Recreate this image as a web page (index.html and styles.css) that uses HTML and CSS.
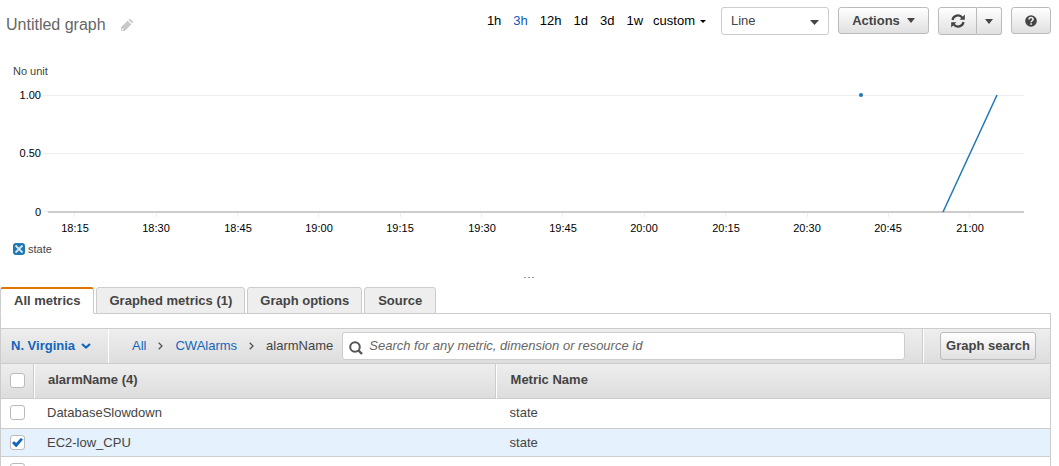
FILE: index.html
```html
<!DOCTYPE html>
<html lang="en">
<head>
<meta charset="utf-8">
<title>CloudWatch Metrics</title>
<link rel="stylesheet" href="styles.css">
</head>
<body>
<header class="header">
  <h1 class="title">Untitled graph</h1>
  <button class="icon-button" type="button" aria-label="Edit title">
    <svg width="12" height="12" viewBox="0 0 12 12"><path fill="#c8c8c8" d="M0 12V8.300L6.600 1.700l3.700 3.700L3.700 12zM7.400.900L8 .400a1.300 1.300 0 0 1 1.800 0l1.800 1.800a1.300 1.300 0 0 1 0 1.800l-.500.600z"/><path fill="#fff" d="M1.200 9.400l1.400 1.400-.500.500H.800V9.800z"/></svg>
  </button>
  <nav class="ranges" aria-label="Time range">
    <a href="#1h">1h</a>
    <a href="#3h" class="current">3h</a>
    <a href="#12h">12h</a>
    <a href="#1d">1d</a>
    <a href="#3d">3d</a>
    <a href="#1w">1w</a>
    <a href="#custom" class="custom">custom <svg width="6" height="3" viewBox="0 0 6 3"><path d="M0 0h6L3 3z"/></svg></a>
  </nav>
  <div class="controls">
    <div class="select-wrap">
      <select class="select" aria-label="Graph type"><option>Line</option></select>
      <svg class="select-caret" width="9" height="5" viewBox="0 0 9 5"><path fill="#444" d="M0 0h9L4.500 5z"/></svg>
    </div>
    <button class="button actions" type="button">Actions <svg width="8" height="5" viewBox="0 0 8 5"><path fill="#444" d="M0 0h8L4 5z"/></svg></button>
    <div class="split">
      <button class="button refresh" type="button" aria-label="Refresh">
        <svg width="14" height="14" viewBox="0 0 14 14"><g fill="none" stroke="#444" stroke-width="2.200"><path d="M1.500 6A5.500 5.500 0 0 1 11.300 3.600M12.500 8A5.500 5.500 0 0 1 2.700 10.400"/></g><path fill="#444" d="M13.800.600v5.200H8.600zM.200 13.400V8.200h5.200z"/></svg>
      </button>
      <button class="button more" type="button" aria-label="Refresh options">
        <svg width="8" height="5" viewBox="0 0 8 5"><path fill="#444" d="M0 0h8L4 5z"/></svg>
      </button>
    </div>
    <button class="button help" type="button" aria-label="Help">
      <svg width="12" height="12" viewBox="0 0 12 12"><circle cx="6" cy="6" r="5.800" fill="#444"/><path d="M4 4.600C4 3 5 2.600 6 2.600s2.100.600 2.100 1.800C8.100 5.700 6.100 5.800 6.100 7.300" fill="none" stroke="#f2f2f2" stroke-width="1.500"/><path fill="#f2f2f2" d="M5.300 8.200h1.600v1.500H5.300z"/></svg>
    </button>
  </div>
</header>

<section class="chart" aria-label="Graph">
  <svg class="plot" viewBox="0 0 1051 180">
    <text class="unit" x="13" y="15">No unit</text>
    <g class="grid">
      <path d="M43 35.500H1024M43 93.500H1024M43 151.500H48"/>
      <path d="M74.500 153v4M156.500 153v4M237.500 153v4M318.500 153v4M400.500 153v4M481.500 153v4M562.500 153v4M644.500 153v4M725.500 153v4M807.500 153v4M888.500 153v4M969.500 153v4"/>
    </g>
    <path class="axis" d="M48 152H1024"/>
    <g class="y-labels">
      <text x="41" y="39">1.00</text>
      <text x="41" y="97">0.50</text>
      <text x="41" y="156">0</text>
    </g>
    <g class="x-labels">
      <text x="75" y="172">18:15</text>
      <text x="156" y="172">18:30</text>
      <text x="238" y="172">18:45</text>
      <text x="319" y="172">19:00</text>
      <text x="400" y="172">19:15</text>
      <text x="482" y="172">19:30</text>
      <text x="563" y="172">19:45</text>
      <text x="644" y="172">20:00</text>
      <text x="726" y="172">20:15</text>
      <text x="807" y="172">20:30</text>
      <text x="888" y="172">20:45</text>
      <text x="970" y="172">21:00</text>
    </g>
    <path class="series" d="M943 152L997 35"/>
    <circle class="point" cx="861" cy="35" r="2"/>
  </svg>
  <div class="legend">
    <svg width="12" height="12" viewBox="0 0 12 12"><rect width="12" height="12" rx="3" fill="#1f77b4"/><path d="M2.500 2.500l7 7M9.500 2.500l-7 7" stroke="#d5e6f3" stroke-width="1.800"/></svg>
    <span>state</span>
  </div>
</section>

<div class="resizer"><svg width="10" height="1" viewBox="0 0 10 1"><path d="M0 0h2v1H0zM4 0h2v1H4zM8 0h2v1H8z" fill="#999"/></svg></div>

<nav class="tabs" aria-label="Metrics views">
  <button class="tab active" type="button">All metrics</button>
  <button class="tab" type="button">Graphed metrics (1)</button>
  <button class="tab" type="button">Graph options</button>
  <button class="tab" type="button">Source</button>
</nav>

<main class="panel">
  <div class="toolbar">
    <button class="region" type="button">N. Virginia <svg width="10" height="6" viewBox="0 0 10 6"><path d="M1 1l4 3.500L9 1" fill="none" stroke="#1166bb" stroke-width="2.200"/></svg></button>
    <nav class="crumbs" aria-label="Breadcrumb">
      <a href="#all">All</a>
      <svg width="5" height="8" viewBox="0 0 5 8"><path d="M.700.700L4 4 .700 7.300" fill="none" stroke="#555" stroke-width="1.300"/></svg>
      <a href="#cwalarms">CWAlarms</a>
      <svg width="5" height="8" viewBox="0 0 5 8"><path d="M.700.700L4 4 .700 7.300" fill="none" stroke="#555" stroke-width="1.300"/></svg>
      <span>alarmName</span>
    </nav>
    <label class="search">
      <svg width="14" height="14" viewBox="0 0 14 14"><circle cx="6" cy="6" r="4.800" fill="none" stroke="#555" stroke-width="2"/><path d="M9.500 9.500L13 13" stroke="#555" stroke-width="2.400"/></svg>
      <input type="text" aria-label="Search metrics" placeholder="Search for any metric, dimension or resource id">
    </label>
    <div class="toolbar-end"><button class="button graph-search" type="button">Graph search</button></div>
  </div>
  <table class="metrics">
    <colgroup><col class="col-check"><col class="col-name"><col></colgroup>
    <thead>
      <tr><th><input class="check" type="checkbox" aria-label="Select all"></th><th>alarmName&nbsp;(4)</th><th>Metric Name</th></tr>
    </thead>
    <tbody>
      <tr class="first"><td><input class="check" type="checkbox" aria-label="DatabaseSlowdown"></td><td>DatabaseSlowdown</td><td>state</td></tr>
      <tr class="selected"><td><input class="check" type="checkbox" aria-label="EC2-low_CPU" checked></td><td>EC2-low_CPU</td><td>state</td></tr>
      <tr><td><input class="check" type="checkbox" aria-label="Select row"></td><td></td><td></td></tr>
    </tbody>
  </table>
</main>
</body>
</html>
```
FILE: styles.css
```css
* {
  box-sizing: border-box;
}

body {
  display: flex;
  flex-direction: column;
  height: 100vh;
  margin: 0;
  padding-right: 8px;
  overflow: hidden;
  background: #fff;
  color: #444;
  font: 13px/16px "Liberation Sans", Arial, sans-serif;
}

button,
input,
select {
  font: inherit;
  color: inherit;
}

svg {
  display: block;
  flex: none;
}

a {
  color: #1166bb;
  text-decoration: none;
}

.header {
  display: flex;
  align-items: flex-start;
  flex: none;
  height: 60px;
  padding: 7px 0 0 6px;
}

.title {
  margin: 8px 15px 0 0;
  color: #666;
  font-size: 16px;
  font-weight: normal;
  line-height: 20px;
}

.icon-button {
  margin-top: 12px;
  padding: 0;
  border: 0;
  background: none;
}

.ranges {
  display: flex;
  gap: 12px;
  margin: 6px 15px 0 auto;
}

.ranges a {
  color: #000;
}

.ranges .current {
  color: #1155bb;
}

.ranges .custom {
  display: flex;
  align-items: center;
  gap: 5px;
  margin-left: -2px;
}

.controls {
  display: flex;
  align-items: flex-start;
  gap: 9px;
}

.select-wrap {
  position: relative;
}

.select {
  display: block;
  width: 108px;
  height: 28px;
  padding: 0 9px;
  border: 1px solid #ccc;
  border-radius: 3px;
  background: #fff;
  appearance: none;
}

.select-caret {
  position: absolute;
  top: 13px;
  right: 10px;
  pointer-events: none;
}

.button {
  display: flex;
  align-items: center;
  justify-content: center;
  height: 27px;
  padding: 0;
  border: 1px solid #bbb;
  border-radius: 3px;
  background: linear-gradient(#fff, #e0e0e0);
  font-weight: bold;
}

.actions {
  gap: 7px;
  width: 91px;
}

.split {
  display: flex;
}

.refresh,
.more {
  height: 28px;
}

.refresh {
  width: 39px;
  border-radius: 3px 0 0 3px;
}

.more {
  width: 25px;
  border-left: 0;
  border-radius: 0 3px 3px 0;
}

.help {
  width: 40px;
}

.chart {
  flex: none;
}

.plot {
  width: 100%;
  font-size: 11px;
}

.unit {
  fill: #444;
}

.grid {
  fill: none;
  stroke: #eee;
}

.axis {
  stroke: #ccc;
  stroke-width: 2px;
}

.y-labels {
  fill: #000;
  text-anchor: end;
}

.x-labels {
  fill: #000;
  text-anchor: middle;
}

.series {
  fill: none;
  stroke: #1f77b4;
  stroke-width: 1.5px;
}

.point {
  fill: #1f77b4;
}

.legend {
  display: flex;
  align-items: center;
  gap: 3px;
  padding: 1px 0 0 13px;
  font-size: 11px;
}

.resizer {
  display: flex;
  flex: none;
  justify-content: center;
  height: 30px;
  padding: 20px 0 0 6px;
}

.tabs {
  display: flex;
  flex: none;
  gap: 2px;
  position: relative;
  margin-bottom: -1px;
}

.tab {
  height: 27px;
  padding: 0 12px;
  border: 1px solid #ccc;
  border-radius: 3px 3px 0 0;
  background: #eee;
  font-weight: bold;
}

.tab:first-child,
.tab:last-child {
  padding: 0 13px;
}

.tab.active {
  border-top: 2px solid #e07700;
  border-bottom-color: #fff;
  background: #fff;
}

.panel {
  flex: 1;
  min-height: 0;
  padding-top: 14px;
  overflow: hidden;
  border: 1px solid #ccc;
  border-bottom: 0;
}

.toolbar {
  display: flex;
  align-items: center;
  height: 36px;
  border: solid #ccc;
  border-width: 1px 0;
  background: linear-gradient(#eee, #ddd);
}

.region {
  display: flex;
  align-items: center;
  align-self: stretch;
  gap: 6px;
  width: 108px;
  padding: 0 0 0 10px;
  border: 0;
  border-right: 1px solid #fff;
  background: none;
  color: #1166bb;
  font-weight: bold;
}

.crumbs {
  display: flex;
  align-items: center;
  gap: 12px;
  padding: 0 9px 0 23px;
}

.search {
  display: flex;
  align-items: center;
  flex: 1;
  gap: 6px;
  height: 28px;
  padding: 0 6px;
  border: 1px solid #ccc;
  border-radius: 3px;
  background: #fff;
}

.search svg {
  margin-top: 3px;
}

.search input {
  flex: 1;
  min-width: 0;
  padding: 0;
  border: 0;
  outline: 0;
  background: none;
}

.search input::placeholder {
  color: #666;
  font-style: italic;
  opacity: 1;
}

.toolbar-end {
  display: flex;
  align-items: center;
  align-self: stretch;
  margin-left: 17px;
  padding: 0 14px 0 17px;
  border-left: 1px solid #ccc;
  box-shadow: inset 1px 0 #fff;
}

.graph-search {
  width: 96px;
  height: 28px;
}

.metrics {
  width: 100%;
  border-collapse: separate;
  border-spacing: 0;
  table-layout: fixed;
}

.col-check {
  width: 33px;
}

.col-name {
  width: 44%;
}

.metrics th,
.metrics td {
  height: 28px;
  padding: 0 0 0 13px;
  border-bottom: 1px solid #ccc;
  text-align: left;
}

.metrics td:last-child {
  padding-left: 14px;
}

.metrics th {
  height: 35px;
  padding-bottom: 2px;
  border-right: 1px solid #ccc;
  background: linear-gradient(#eee, #ddd);
}

.metrics th + th {
  border-left: 1px solid #fff;
}

.metrics th:last-child {
  padding-left: 14px;
  border-right: 0;
}

.metrics .first td {
  height: 30px;
  padding-bottom: 2px;
}

.metrics tr > :first-child {
  padding-left: 9px;
}

.selected {
  background: #e5f1fd;
}

.check {
  display: block;
  width: 15px;
  height: 15px;
  margin: 0;
  border: 1px solid #bbb;
  border-radius: 3px;
  background: #fff;
  appearance: none;
}

.check:checked::after {
  content: "";
  display: block;
  width: 11px;
  height: 9px;
  margin: 2px 1px;
  background: #1166bb;
  clip-path: polygon(0 55%, 18% 36%, 38% 55%, 80% 0, 100% 18%, 42% 100%, 34% 100%);
}
```
